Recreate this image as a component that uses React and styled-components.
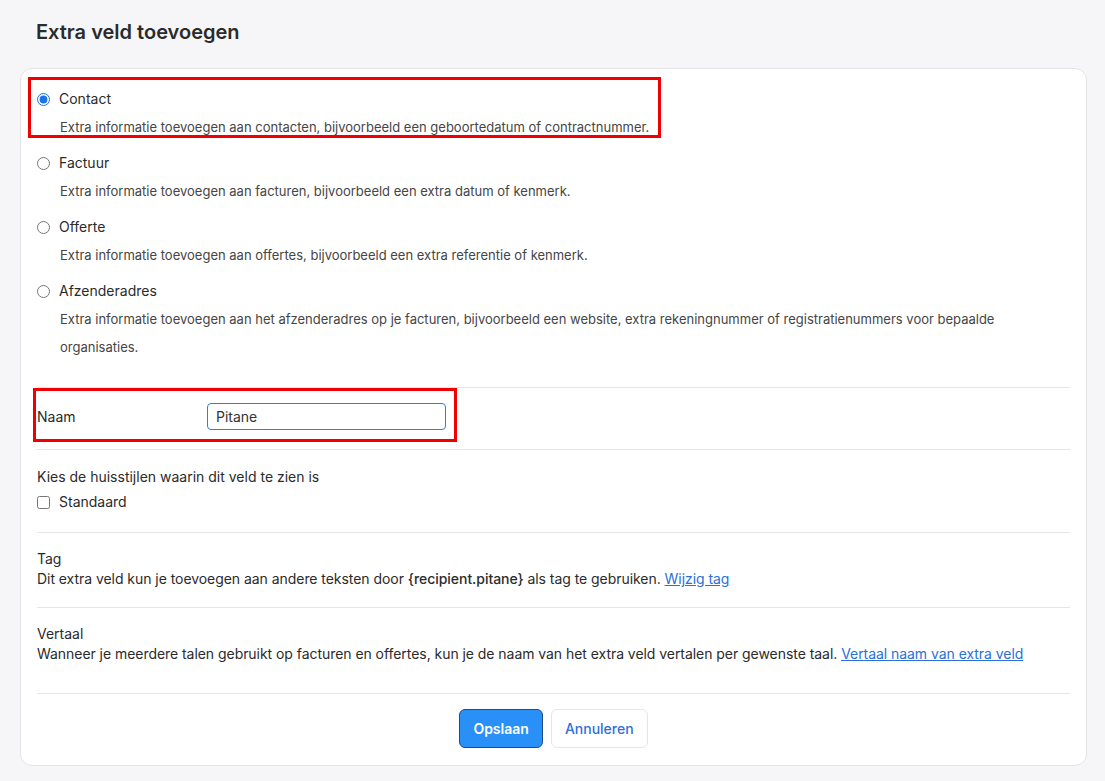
import React from "react";
import styled, { createGlobalStyle } from "styled-components";

const GlobalStyle = createGlobalStyle`
  html, body {
    margin: 0;
    padding: 0;
    background: #f6f6f8;
    font-family: Inter, "Noto Sans", "Liberation Sans", sans-serif;
    color: #2b2b2b;
  }
`;

const types = [
  {
    id: "contact",
    label: "Contact",
    text: "Extra informatie toevoegen aan contacten, bijvoorbeeld een geboortedatum of contractnummer.",
  },
  {
    id: "factuur",
    label: "Factuur",
    text: "Extra informatie toevoegen aan facturen, bijvoorbeeld een extra datum of kenmerk.",
  },
  {
    id: "offerte",
    label: "Offerte",
    text: "Extra informatie toevoegen aan offertes, bijvoorbeeld een extra referentie of kenmerk.",
  },
  {
    id: "afzender",
    label: "Afzenderadres",
    text: "Extra informatie toevoegen aan het afzenderadres op je facturen, bijvoorbeeld een website, extra rekeningnummer of registratienummers voor bepaalde organisaties.",
  },
];

const App = () => {
  return (
    <>
      <GlobalStyle />
      <Page>
        <Title>Extra veld toevoegen</Title>
        <Card>
          <Options>
            {types.map((t, i) => (
              <Option key={t.id}>
                {i === 0 && <Marker $left={-9} $top={-12} $w={633} $h={61} />}
                <OptionLabel>
                  <Radio type="radio" name="type" defaultChecked={i === 0} />
                  {t.label}
                </OptionLabel>
                <OptionText>{t.text}</OptionText>
              </Option>
            ))}
          </Options>

          <NameRow>
            <Marker $left={-4} $top={0} $w={424} $h={54} />
            <FieldLabel>Naam</FieldLabel>
            <TextInput defaultValue="Pitane" />
          </NameRow>

          <Section $top={17} $bottom={20}>
            <Heading>Kies de huisstijlen waarin dit veld te zien is</Heading>
            <CheckLabel>
              <Check type="checkbox" />
              Standaard
            </CheckLabel>
          </Section>

          <Section $top={16} $bottom={18}>
            <Heading>Tag</Heading>
            <Paragraph>
              Dit extra veld kun je toevoegen aan andere teksten door{" "}
              <strong>{"{recipient.pitane}"}</strong> als tag te gebruiken.{" "}
              <Link href="#">Wijzig tag</Link>
            </Paragraph>
          </Section>

          <Section $top={16} $bottom={29}>
            <Heading>Vertaal</Heading>
            <Paragraph>
              Wanneer je meerdere talen gebruikt op facturen en offertes, kun je de naam van het
              extra veld vertalen per gewenste taal.{" "}
              <Link href="#">Vertaal naam van extra veld</Link>
            </Paragraph>
          </Section>

          <Footer>
            <PrimaryButton>Opslaan</PrimaryButton>
            <SecondaryButton>Annuleren</SecondaryButton>
          </Footer>
        </Card>
      </Page>
    </>
  );
};

const Page = styled.div`
  padding: 20px 18px 16px 20px;
`;

const Title = styled.h1`
  margin: 0 0 24px 16px;
  font-size: 20px;
  line-height: 24px;
  font-weight: 600;
  color: #2b2b2b;
`;

const Card = styled.div`
  background: #fff;
  border: 1px solid #e4e4e8;
  border-radius: 12px;
  padding: 20px 16px 17px;
`;

const Options = styled.div`
  display: flex;
  flex-direction: column;
  gap: 12px;
  padding-bottom: 26px;
  border-bottom: 1px solid #e6e6e9;
`;

const Option = styled.div`
  position: relative;
`;

const Marker = styled.div`
  position: absolute;
  left: ${(p) => p.$left}px;
  top: ${(p) => p.$top}px;
  width: ${(p) => p.$w}px;
  height: ${(p) => p.$h}px;
  box-sizing: border-box;
  border: 3px solid #f00000;
  pointer-events: none;
`;

const OptionLabel = styled.label`
  display: flex;
  align-items: center;
  gap: 9px;
  font-size: 14px;
  line-height: 20px;
  color: #2b2b2b;
`;

const Radio = styled.input`
  margin: 0;
  width: 13px;
  height: 13px;
  accent-color: #1a73e8;
`;

const OptionText = styled.p`
  margin: 4px 0 0 23px;
  font-size: 13px;
  line-height: 28px;
  color: #454545;
`;

const NameRow = styled.div`
  position: relative;
  display: flex;
  align-items: center;
  padding: 15px 0 19px;
  border-bottom: 1px solid #e6e6e9;
`;

const FieldLabel = styled.label`
  width: 170px;
  font-size: 14px;
  line-height: 20px;
`;

const TextInput = styled.input`
  box-sizing: border-box;
  width: 239px;
  height: 27px;
  padding: 0 8px;
  border: 1px solid #2a7fe0;
  border-radius: 4px;
  font-family: inherit;
  font-size: 14px;
  color: #333;
  outline: none;
`;

const Section = styled.div`
  padding: ${(p) => p.$top}px 0 ${(p) => p.$bottom}px;
  border-bottom: 1px solid #e6e6e9;
`;

const Heading = styled.div`
  font-size: 14px;
  line-height: 20px;
  color: #2b2b2b;
`;

const Paragraph = styled.p`
  margin: 0;
  font-size: 14px;
  line-height: 20px;
  letter-spacing: -0.05px;
  color: #2b2b2b;

  strong {
    font-weight: 500;
  }
`;

const Link = styled.a`
  color: #2a6fdb;
  text-decoration: underline;
`;

const CheckLabel = styled.label`
  display: flex;
  align-items: center;
  gap: 9px;
  margin-top: 5px;
  font-size: 14px;
  line-height: 20px;
`;

const Check = styled.input`
  margin: 0;
  width: 13px;
  height: 13px;
`;

const Footer = styled.div`
  display: flex;
  justify-content: center;
  gap: 8px;
  padding-top: 15px;
`;

const PrimaryButton = styled.button`
  height: 39px;
  padding: 0 13px;
  border: 1px solid #1d4c86;
  border-radius: 6px;
  background: #2990f8;
  color: #fff;
  font-family: inherit;
  font-size: 14px;
  font-weight: 600;
`;

const SecondaryButton = styled.button`
  height: 39px;
  padding: 0 13px;
  border: 1px solid #e6e6ea;
  border-radius: 6px;
  background: #fff;
  color: #2f6fdb;
  font-family: inherit;
  font-size: 14px;
  font-weight: 500;
`;

export default App;
